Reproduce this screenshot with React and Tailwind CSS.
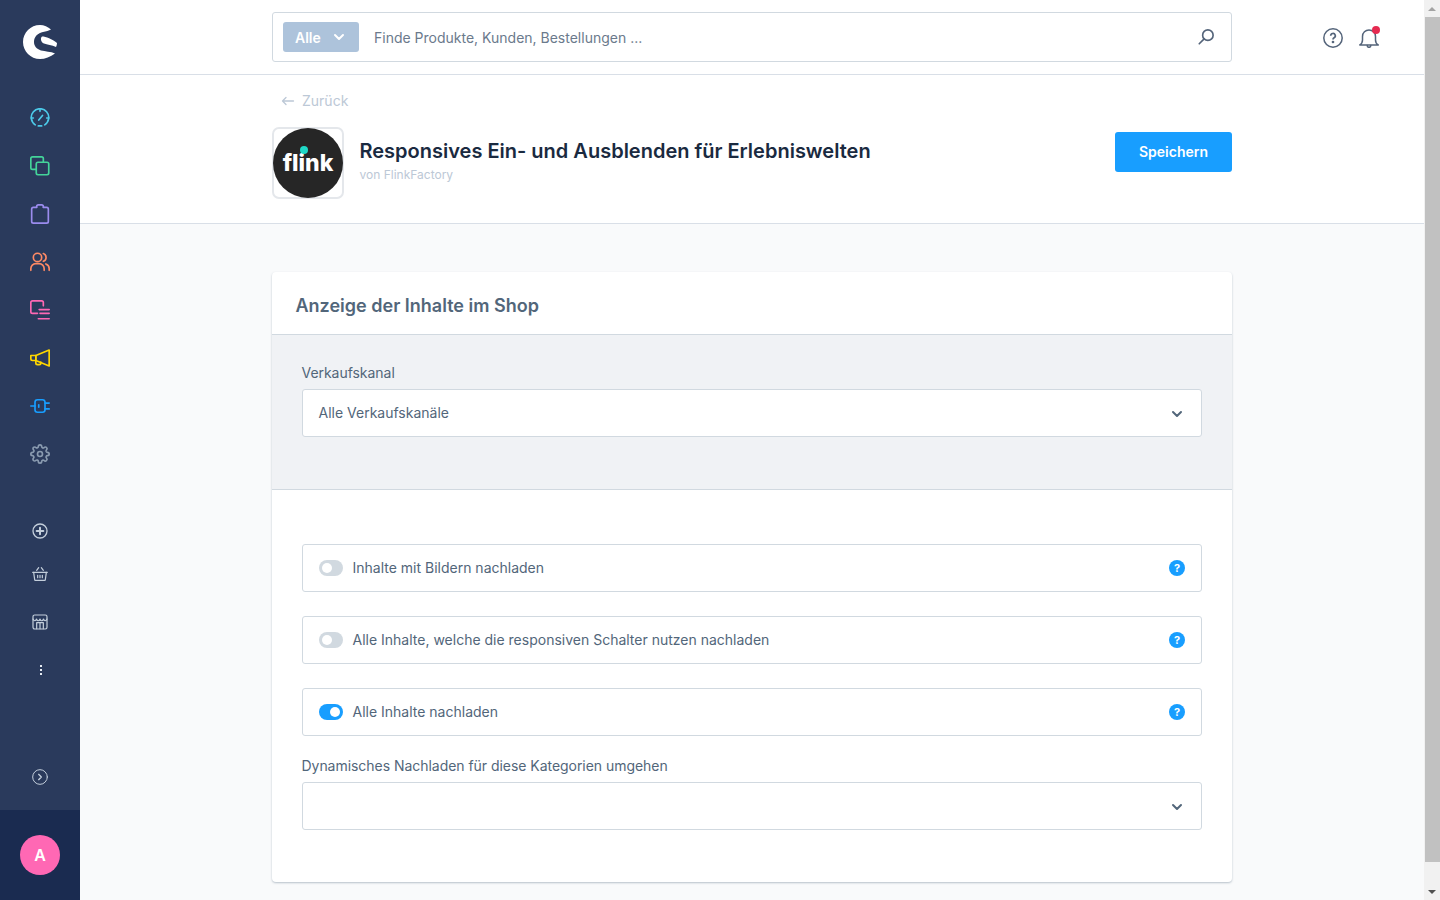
import React from 'react'
import { ChevronDown } from 'lucide-react'

const font = { fontFamily: 'Inter, sans-serif' }

const Ico = ({ color, size = 24, sw = 2, children, box = '0 0 24 24' }) => (
  <svg width={size} height={size} viewBox={box} fill="none" stroke={color} strokeWidth={sw} strokeLinecap="round" strokeLinejoin="round">
    {children}
  </svg>
)

const mainNav = [
  <Ico color="#4cc9e8" key="dash">
    <path d="M6.300 20.200A10.500 10.500 0 1 1 17.700 20.200" />
    <path d="M10 21.500h4" />
    <path d="M10.500 14.500l4.500-5.500" />
    <path d="M12 1.500v2.500M1.500 12h2.500M20 12h2.500" />
  </Ico>,
  <Ico color="#44d49a" key="cat">
    <path d="M7 16H3a2 2 0 0 1-2-2V3a2 2 0 0 1 2-2h11a2 2 0 0 1 2 2v4" />
    <rect x="7.500" y="7.500" width="15" height="15" rx="2" />
  </Ico>,
  <Ico color="#9b8cee" key="orders">
    <path d="M8 4H4a2 2 0 0 0-2 2v15a2 2 0 0 0 2 2h16a2 2 0 0 0 2-2V6a2 2 0 0 0-2-2h-4" />
    <path d="M8 4V3a2 2 0 0 1 2-2h4a2 2 0 0 1 2 2v1" />
  </Ico>,
  <Ico color="#ff8a65" key="cust">
    <circle cx="9" cy="6.500" r="5" />
    <path d="M1 22v-2a6 6 0 0 1 6-6h4a6 6 0 0 1 6 6v2" />
    <path d="M16 1.800a5 5 0 0 1 0 9.400" />
    <path d="M19 14.300a6 6 0 0 1 4 5.700v2" />
  </Ico>,
  <Ico color="#ff68b4" key="content">
    <path d="M9 16H3a2 2 0 0 1-2-2V3a2 2 0 0 1 2-2h11a2 2 0 0 1 2 2v4" />
    <path d="M11 11.500h12M12 16h11M10 22.500h13" />
  </Ico>,
  <Ico color="#ffd700" key="mkt">
    <path d="M1 9h6v6H3a2 2 0 0 1-2-2z" />
    <path d="M7 9l16-6.500v19L7 15z" />
    <path d="M7 15v3a2 2 0 0 0 2 2h2a2 2 0 0 0 2-2v-1" />
  </Ico>,
  <Ico color="#189eff" key="ext">
    <path d="M1 12h5" />
    <rect x="6" y="4.500" width="12" height="15" rx="3" />
    <path d="M18 8.500h5M18 15.500h5" />
    <path d="M10.500 10.500v3" />
  </Ico>,
  <Ico color="#8a9bb0" key="set">
    <circle cx="12" cy="12" r="3" />
    <path d="M19.400 15a1.700 1.700 0 0 0 .3 1.800l.1.100a2 2 0 1 1-2.900 2.900l-.1-.1a1.700 1.700 0 0 0-2.800 1.200V21a2 2 0 1 1-4 0v-.1a1.700 1.700 0 0 0-2.900-1.200l-.1.100a2 2 0 1 1-2.800-2.900l.1-.1a1.700 1.700 0 0 0-1.200-2.800H3a2 2 0 1 1 0-4h.1a1.700 1.700 0 0 0 1.200-2.900l-.1-.1a2 2 0 1 1 2.900-2.800l.1.100a1.700 1.700 0 0 0 1.800.3H9a1.700 1.700 0 0 0 1-1.500V3a2 2 0 1 1 4 0v.1a1.700 1.700 0 0 0 2.900 1.200l.1-.1a2 2 0 1 1 2.800 2.900l-.1.100a1.700 1.700 0 0 0-.3 1.800V9a1.700 1.700 0 0 0 1.500 1H21a2 2 0 1 1 0 4h-.1a1.700 1.700 0 0 0-1.500 1z" />
  </Ico>,
]

const Sidebar = () => (
  <aside className="w-20 shrink-0 h-full flex flex-col bg-[#2a3a5c]">
    <div className="h-[94px] pt-[25px] pl-[23px] shrink-0">
      <svg width="34" height="34" viewBox="0 0 34 34" className="block">
        <path fill="#fff" d="M28 4.500C25 1.800 21 0 17 0C7.600 0 0 7.600 0 17C0 26.400 7.600 34 17 34C22 34 27.500 32 32 28.500C28 26.500 22 26.500 18 25.500C13.500 24 11 21 11 17C11 11.500 15 8 20 7C23 6.500 26 5.500 28 4.500Z" />
        <path fill="#fff" d="M19 11.500C23 11.500 29 14 34 18C34 19.500 33.500 21 33 22C29 20 24 19.500 21 18.500C18 17.500 17 13 19 11.500Z" />
      </svg>
    </div>
    <nav className="flex flex-col items-center">
      {mainNav.map((icon, i) => (
        <div key={i} className="h-12 flex items-center justify-center [&>svg]:w-5 [&>svg]:h-5">{icon}</div>
      ))}
    </nav>
    <div className="mt-[29px] flex flex-col items-center">
      <div className="h-12 flex items-center justify-center">
        <Ico color="#c3cedb" size={16}>
          <circle cx="12" cy="12" r="10.500" />
          <path d="M12 7v10M7 12h10" strokeWidth="3" />
        </Ico>
      </div>
      <div className="h-12 -mt-[5px] flex items-center justify-center">
        <Ico color="#c3cedb" size={16} sw={1.800}>
          <path d="M1 9.500h22" />
          <path d="M2.500 9.500l1.500 11a1 1 0 0 0 1 1h14a1 1 0 0 0 1-1l1.500-11" />
          <path d="M7 6.500l3-4M17 6.500l-3-4" />
          <path d="M8.500 14v3.500M12 14v3.500M15.500 14v3.500" />
        </Ico>
      </div>
      <div className="h-12 flex items-center justify-center">
        <Ico color="#c3cedb" size={16} sw={1.800}>
          <rect x="1.500" y="1.500" width="21" height="21" rx="2.500" />
          <path d="M1.500 7.500c1.500 3.500 4 3.500 5.250 0 1 3.500 4.250 3.500 5.250 0 1 3.500 4.250 3.500 5.250 0 1.250 3.500 3.750 3.500 5.250 0" />
          <path d="M7 22v-9h10v9M12 13v9" />
        </Ico>
      </div>
      <div className="h-12 flex items-center justify-center">
        <div className="flex flex-col gap-[2px] ml-[1px]">
          <span className="w-[2px] h-[2px] bg-[#e6ebf2]" />
          <span className="w-[2px] h-[2px] bg-[#e6ebf2]" />
          <span className="w-[2px] h-[2px] bg-[#e6ebf2]" />
        </div>
      </div>
    </div>
    <div className="mt-auto h-[41px] flex items-start justify-center">
      <Ico color="#c3cedb" size={16} sw={1.500}>
        <circle cx="12" cy="12" r="11" />
        <path d="M10 8l4 4-4 4" strokeWidth="2" />
      </Ico>
    </div>
    <div className="h-[90px] shrink-0 bg-[#1a2b50] flex items-center justify-center">
      <div className="w-10 h-10 rounded-full bg-[#ff68b4] flex items-center justify-center text-white font-semibold text-base">A</div>
    </div>
  </aside>
)

const TopBar = () => (
  <header className="h-[75px] shrink-0 bg-white border-b border-[#d9dfe7] flex items-center">
    <div className="ml-[192px] w-[960px] h-[50px] rounded-[3px] border border-[#d1d9e0] flex items-center pl-[10px] pr-[16px]">
      <div className="w-[76px] h-[30px] rounded-[3px] bg-[#adc3db] flex items-center pl-3 text-white text-sm font-semibold">
        <span className="pt-[1px]">Alle</span>
        <ChevronDown className="ml-[10px] w-4 h-4" strokeWidth={3} />
      </div>
      <span className="ml-[15px] pt-[2px] text-sm text-[#6b7a8c]">Finde Produkte, Kunden, Bestellungen ...</span>
      <div className="ml-auto">
        <Ico color="#54647a" size={18} sw={2.200}>
          <circle cx="14.500" cy="9.500" r="7" />
          <path d="M9.500 14.500L3 21" />
        </Ico>
      </div>
    </div>
    <div className="ml-[91px] mt-[2px] flex items-center gap-[16px]">
      <svg width="20" height="20" viewBox="0 0 20 20" fill="none" stroke="#54647a" strokeWidth="1.500">
        <circle cx="10" cy="10" r="9.200" />
        <path d="M7.700 7.800a2.300 2.300 0 1 1 3.400 2c-.7.400-1.100.8-1.100 1.600" strokeWidth="1.700" />
        <circle cx="10" cy="14" r=".6" fill="#54647a" />
      </svg>
      <div className="relative w-5 h-5">
        <svg width="20" height="20" viewBox="0 0 20 20" fill="none" stroke="#54647a" strokeWidth="1.500" strokeLinejoin="round" strokeLinecap="round">
          <path d="M0.800 17c1.700-1 2.700-2.500 2.700-5V8.500C3.500 4.500 6.500 2 10 2s6.500 2.500 6.500 6.500V12c0 2.500 1 4 2.700 5z" />
          <path d="M8.200 17.500a1.800 1.800 0 0 0 3.600 0" />
        </svg>
        <span className="absolute -top-[2px] right-[-1px] w-2 h-2 rounded-full bg-[#e52a50]" />
      </div>
    </div>
  </header>
)

const SmartBar = () => (
  <div className="h-[149px] shrink-0 bg-white border-b border-[#d9dfe7] pl-[192px] pr-[192px]">
    <div className="pt-[17px] flex items-center h-[35px] pl-[9px] text-sm text-[#bcc8d6]">
      <svg width="14" height="10" viewBox="0 0 14 10" fill="none" stroke="#bcc8d6" strokeWidth="1.300" strokeLinecap="round" strokeLinejoin="round" className="mr-[7px]">
        <path d="M12.500 5H1.500M5 1.500L1.500 5 5 8.500" />
      </svg>
      Zurück
    </div>
    <div className="flex items-start mt-[17px]">
      <div className="w-[72px] h-[72px] rounded-[7px] border-2 border-[#e4e7eb] bg-white flex items-center justify-center shrink-0">
        <div className="w-[70px] h-[70px] shrink-0 rounded-full bg-[#262626] relative flex items-center justify-center">
          <span className="text-white font-extrabold text-[23px] leading-none mt-[1px]">flink</span>
          <span className="absolute top-[18px] left-[27px] w-2 h-2 rounded-full bg-[#1fd8c6]" />
        </div>
      </div>
      <div className="ml-[15.500px] mt-[12px]">
        <h1 className="text-[20px] leading-[24px] font-semibold text-[#1a2a40]">Responsives Ein- und Ausblenden für Erlebniswelten</h1>
        <p className="text-xs leading-4 mt-[4px] text-[#bcc8d6]">von FlinkFactory</p>
      </div>
      <button className="ml-auto mt-[5px] w-[117px] h-10 rounded-[3px] bg-[#189eff] text-white text-sm font-semibold">Speichern</button>
    </div>
  </div>
)

const HelpDot = () => (
  <span className="w-4 h-4 rounded-full bg-[#189eff] text-white text-[11px] font-bold flex items-center justify-center leading-none">?</span>
)

const Toggle = ({ on, label }) => (
  <div className="h-12 rounded-[3px] border border-[#d1d9e0] bg-white flex items-center pl-4 pr-4">
    {on ? (
      <span className="w-6 h-4 rounded-full bg-[#189eff] flex items-center justify-end pr-[3px]">
        <span className="w-[10px] h-[10px] rounded-full bg-white" />
      </span>
    ) : (
      <span className="w-6 h-4 rounded-full bg-[#d1d9e0] flex items-center pl-[3px]">
        <span className="w-[10px] h-[10px] rounded-full bg-white" />
      </span>
    )}
    <span className="ml-[9.500px] text-sm text-[#52667a]">{label}</span>
    <span className="ml-auto"><HelpDot /></span>
  </div>
)

const SelectBox = ({ value }) => (
  <div className="h-12 rounded-[3px] border border-[#d1d9e0] bg-white flex items-center pl-[15.500px] pr-4 text-sm text-[#52667a]">
    <span>{value}</span>
    <ChevronDown className="ml-auto mt-[1px] w-4 h-4 text-[#52667a]" strokeWidth={3} />
  </div>
)

const Card = () => (
  <section className="ml-[192px] mt-12 w-[960px] h-[610px] rounded-[4px] bg-white shadow-[0_1px_2px_rgba(120,138,155,0.5)]">
    <div className="h-[63px] border-b border-[#d1d9e0] flex items-center pl-[23.500px] pr-6 pt-[5px]">
      <h2 className="text-lg font-semibold text-[#52667a]">Anzeige der Inhalte im Shop</h2>
    </div>
    <div className="h-[155px] bg-[#f0f2f5] border-b border-[#d1d9e0] px-[30px] pt-[29px]">
      <label className="block text-sm leading-[18px] tracking-[-0.04px] text-[#52667a] mb-[7px] -ml-[0.500px]">Verkaufskanal</label>
      <SelectBox value="Alle Verkaufskanäle" />
    </div>
    <div className="px-[30px] pt-[54px]">
      <div className="flex flex-col gap-6">
        <Toggle label="Inhalte mit Bildern nachladen" />
        <Toggle label="Alle Inhalte, welche die responsiven Schalter nutzen nachladen" />
        <Toggle on label="Alle Inhalte nachladen" />
      </div>
      <label className="block text-sm leading-[18px] tracking-[-0.04px] text-[#52667a] mt-[21px] mb-[7px] -ml-[0.500px]">Dynamisches Nachladen für diese Kategorien umgehen</label>
      <SelectBox value="" />
    </div>
  </section>
)

const Scrollbar = () => (
  <div className="w-4 shrink-0 h-full bg-[#f1f1f1] flex flex-col items-center">
    <div className="h-[17px] flex items-center justify-center">
      <span className="w-0 h-0 border-x-[4px] border-x-transparent border-b-[4px] border-b-[#a3a3a3]" />
    </div>
    <div className="w-[15px] ml-[1px] h-[845px] bg-[#c1c1c1]" />
    <div className="mt-auto h-[17px] flex items-center justify-center">
      <span className="w-0 h-0 border-x-[4px] border-x-transparent border-t-[4px] border-t-[#505050]" />
    </div>
  </div>
)

export default function App() {
  return (
    <div className="w-[1440px] h-[900px] overflow-hidden flex bg-[#f9fafb]" style={font}>
      <Sidebar />
      <main className="flex-1 h-full flex flex-col min-w-0">
        <TopBar />
        <SmartBar />
        <Card />
      </main>
      <Scrollbar />
    </div>
  )
}
